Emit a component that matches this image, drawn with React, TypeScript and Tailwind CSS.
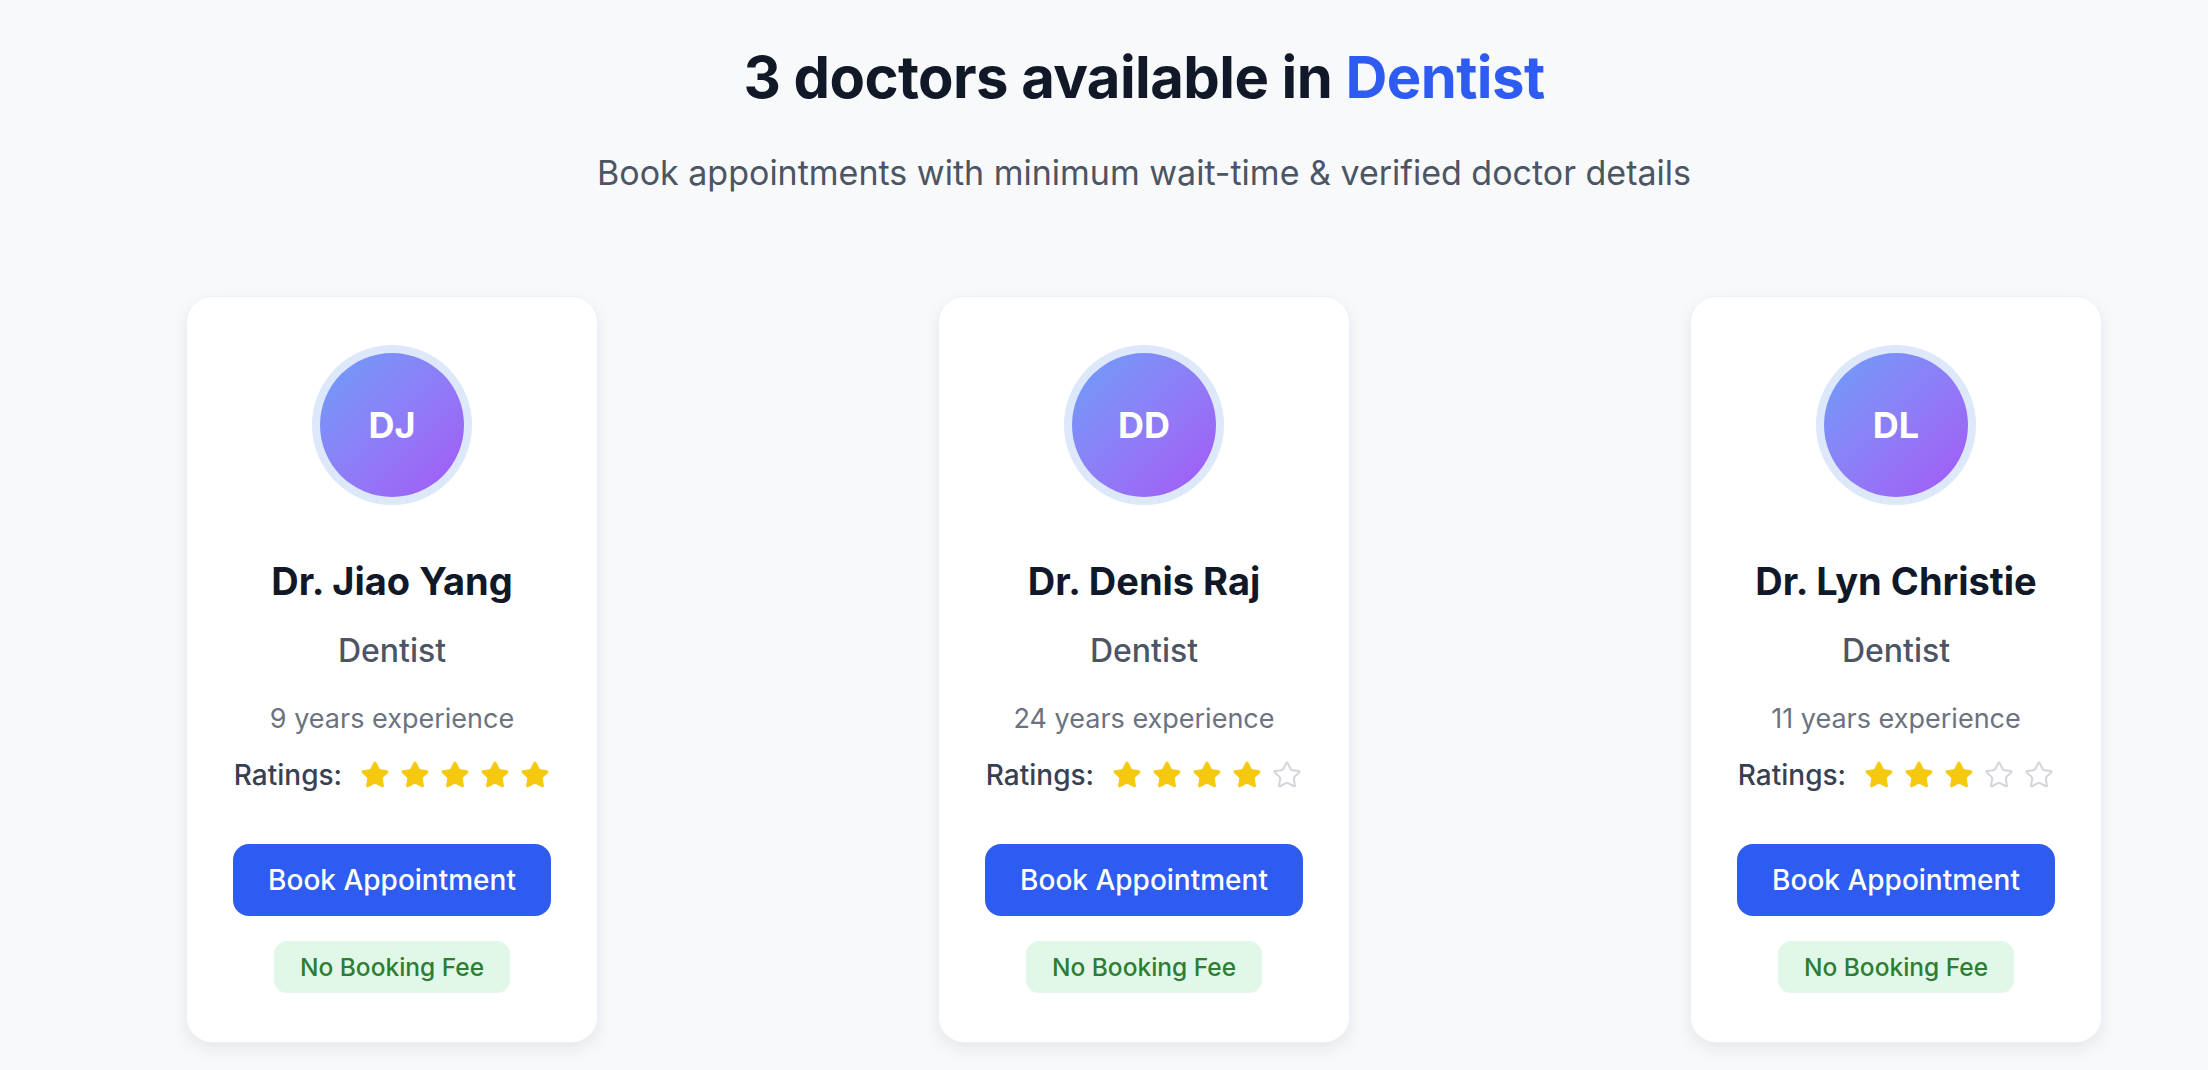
import { Star } from 'lucide-react'

const doctors = [
  { initials: 'DJ', name: 'Dr. Jiao Yang', specialty: 'Dentist', years: 9, rating: 5 },
  { initials: 'DD', name: 'Dr. Denis Raj', specialty: 'Dentist', years: 24, rating: 4 },
  { initials: 'DL', name: 'Dr. Lyn Christie', specialty: 'Dentist', years: 11, rating: 3 },
]

function DoctorCard({ doc }: { doc: (typeof doctors)[number] }) {
  return (
    <div className="w-[412px] bg-white rounded-[26px] border border-[#eef0f3] shadow-[0_6px_16px_rgba(15,23,42,0.08)] flex flex-col items-center pt-[48px] pb-[49px]">
      <div className="w-[160px] h-[160px] rounded-full bg-[#dde8fb] flex items-center justify-center">
        <div className="w-[144px] h-[144px] rounded-full bg-gradient-to-br from-[#6a9ef8] to-[#a356f5] flex items-center justify-center text-white font-bold text-[36px] leading-none">
          {doc.initials}
        </div>
      </div>

      <h2 className="mt-[52px] text-[38px] leading-[48px] font-bold text-[#111827]">{doc.name}</h2>
      <p className="mt-[26px] text-[32px] leading-[40px] font-medium text-[#4b5563]">{doc.specialty}</p>
      <p className="mt-[31px] text-[27px] leading-[34px] text-[#6b7280]">{doc.years} years experience</p>

      <div className="mt-[21px] flex items-center gap-[18px]">
        <span className="text-[28px] leading-[36px] font-medium text-[#374151]">Ratings:</span>
        <div className="flex items-center gap-[10px]">
          {[0, 1, 2, 3, 4].map((i) =>
            i < doc.rating ? (
              <Star key={i} size={30} strokeWidth={1.5} className="text-[#f5c90f] fill-[#f5c90f]" />
            ) : (
              <Star key={i} size={30} strokeWidth={1.6} className="text-[#d1d5db]" />
            )
          )}
        </div>
      </div>

      <button className="mt-[51px] h-[72px] px-[35px] rounded-[16px] bg-[#2f5cf0] text-white text-[28px] font-medium">
        Book Appointment
      </button>

      <span className="mt-[25px] h-[52px] px-[26px] rounded-[13px] bg-[#e1f8e8] text-[#2e7d32] text-[24.5px] font-medium flex items-center">
        No Booking Fee
      </span>
    </div>
  )
}

export default function App() {
  return (
    <div className="min-h-[1070px] bg-[#f8f9fb] pl-[80px] font-['Inter',sans-serif]">
      <div className="flex flex-col items-center pt-[42px]">
        <h1 className="text-[58px] leading-[70px] font-bold text-[#111827] tracking-[-0.01em]">
          3 doctors available in <span className="text-[#2f5cf0]">Dentist</span>
        </h1>
        <p className="mt-[40px] text-[34px] leading-[42px] text-[#4b5563]">
          Book appointments with minimum wait-time &amp; verified doctor details
        </p>
      </div>

      <div className="mt-[102px] flex justify-center gap-[340px]">
        {doctors.map((d) => (
          <DoctorCard key={d.initials} doc={d} />
        ))}
      </div>
    </div>
  )
}
